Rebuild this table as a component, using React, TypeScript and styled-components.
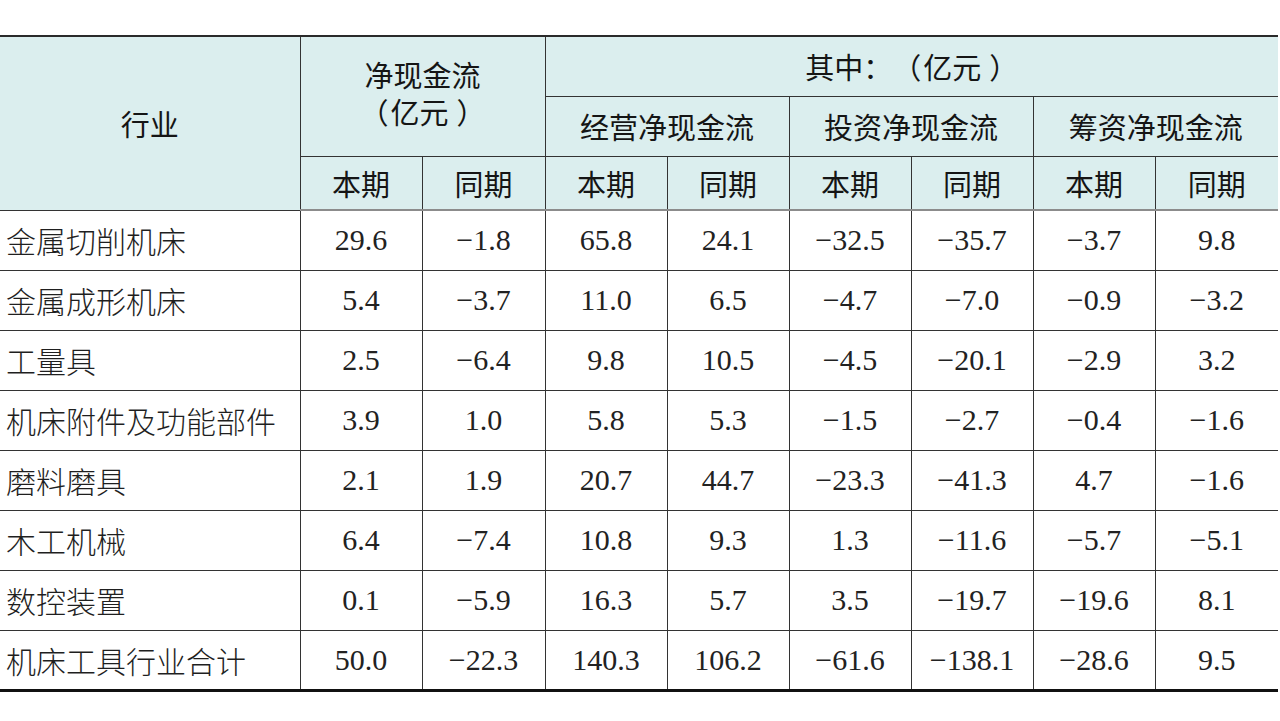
import React from "react";
import styled, { createGlobalStyle } from "styled-components";

const GlobalStyle = createGlobalStyle`
  html, body {
    margin: 0;
    padding: 0;
    background: #ffffff;
  }
`;

interface Row {
  name: string;
  values: string[];
}

const rows: Row[] = [
  { name: "金属切削机床", values: ["29.6", "−1.8", "65.8", "24.1", "−32.5", "−35.7", "−3.7", "9.8"] },
  { name: "金属成形机床", values: ["5.4", "−3.7", "11.0", "6.5", "−4.7", "−7.0", "−0.9", "−3.2"] },
  { name: "工量具", values: ["2.5", "−6.4", "9.8", "10.5", "−4.5", "−20.1", "−2.9", "3.2"] },
  { name: "机床附件及功能部件", values: ["3.9", "1.0", "5.8", "5.3", "−1.5", "−2.7", "−0.4", "−1.6"] },
  { name: "磨料磨具", values: ["2.1", "1.9", "20.7", "44.7", "−23.3", "−41.3", "4.7", "−1.6"] },
  { name: "木工机械", values: ["6.4", "−7.4", "10.8", "9.3", "1.3", "−11.6", "−5.7", "−5.1"] },
  { name: "数控装置", values: ["0.1", "−5.9", "16.3", "5.7", "3.5", "−19.7", "−19.6", "8.1"] },
  { name: "机床工具行业合计", values: ["50.0", "−22.3", "140.3", "106.2", "−61.6", "−138.1", "−28.6", "9.5"] },
];

const colWidths = [300, 122, 123, 122, 122, 122, 122, 122, 123];

// 亿元 wrapped in loose full-width brackets, as in the source table
const Unit = () => (
  <UnitText>
    （<UnitInner>亿元</UnitInner>）
  </UnitText>
);

const App = () => {
  return (
    <Page>
      <GlobalStyle />
      <Table>
        <colgroup>
          {colWidths.map((w, i) => (
            <col key={i} style={{ width: w }} />
          ))}
        </colgroup>
        <thead>
          <HeadRow $height={60}>
            <HeadCell rowSpan={3} $noLeft>
              行业
            </HeadCell>
            <HeadCell rowSpan={2} colSpan={2}>
              <HeadLines>
                <span>净现金流</span>
                <Unit />
              </HeadLines>
            </HeadCell>
            <HeadCell colSpan={6}>
              其中：<Unit />
            </HeadCell>
          </HeadRow>
          <HeadRow $height={60}>
            <HeadCell colSpan={2}>经营净现金流</HeadCell>
            <HeadCell colSpan={2}>投资净现金流</HeadCell>
            <HeadCell colSpan={2}>筹资净现金流</HeadCell>
          </HeadRow>
          <HeadRow $height={54}>
            {Array.from({ length: 8 }).map((_, i) => (
              <HeadCell key={i}>{i % 2 === 0 ? "本期" : "同期"}</HeadCell>
            ))}
          </HeadRow>
        </thead>
        <tbody>
          {rows.map((row, i) => (
            <BodyRow key={i} $last={i === rows.length - 1}>
              <NameCell>{row.name}</NameCell>
              {row.values.map((v, j) => (
                <NumCell key={j}>{v}</NumCell>
              ))}
            </BodyRow>
          ))}
        </tbody>
      </Table>
    </Page>
  );
};

export default App;

const Page = styled.div`
  width: 1280px;
  height: 721px;
  padding-top: 35px;
  box-sizing: border-box;
  background: #ffffff;
`;

const Table = styled.table`
  width: 1278px;
  border-collapse: collapse;
  table-layout: fixed;
  border-top: 2px solid #2a2a2a;
  border-bottom: 3px solid #111111;
`;

const HeadRow = styled.tr<{ $height: number }>`
  height: ${(props) => props.$height}px;
  background: #dbeeee;
`;

const HeadCell = styled.th<{ $noLeft?: boolean }>`
  padding: 0;
  font-family: "Noto Sans CJK SC", "Noto Sans", sans-serif;
  font-weight: 400;
  font-size: 29px;
  color: #151515;
  text-align: center;
  vertical-align: middle;
  text-spacing-trim: space-all;
  border-left: ${(props) => (props.$noLeft ? "none" : "1px solid #333")};
  border-bottom: 1px solid #333;
  tr:last-child > & {
    border-bottom: 2px solid #8c8c8c;
  }
`;

const UnitText = styled.span`
  white-space: nowrap;
`;

const UnitInner = styled.span`
  margin: 0 8px 0 2px;
`;

const HeadLines = styled.div`
  display: flex;
  flex-direction: column;
  align-items: center;
  line-height: 37px;
  margin-top: -6px;
`;

const BodyRow = styled.tr<{ $last: boolean }>`
  height: 60px;
  border-bottom: ${(props) => (props.$last ? "none" : "1px solid #333")};
`;

const NameCell = styled.td`
  padding: 0 0 0 6px;
  font-family: "Liberation Serif", "Noto Sans CJK SC", serif;
  font-weight: 300;
  font-size: 30px;
  color: #1f1f1f;
  text-align: left;
  vertical-align: middle;
  white-space: nowrap;
`;

const NumCell = styled.td`
  padding: 0;
  font-family: "Liberation Serif", serif;
  font-size: 30px;
  color: #222222;
  text-align: center;
  vertical-align: middle;
  border-left: 1px solid #333;
`;
